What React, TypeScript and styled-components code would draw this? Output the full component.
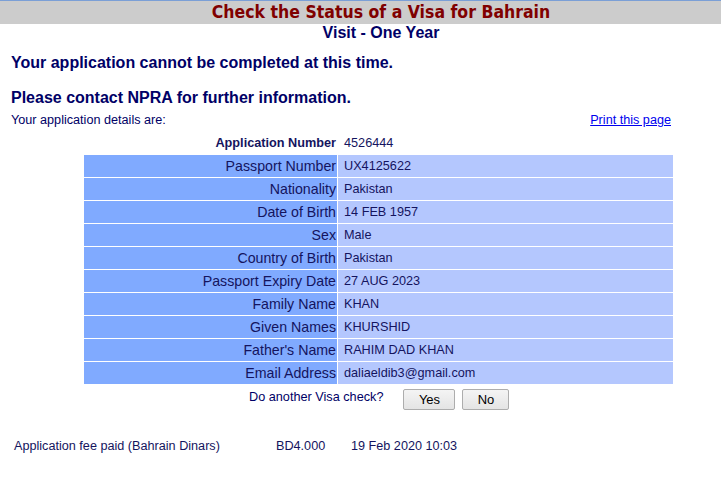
import React from "react";
import styled, { createGlobalStyle } from "styled-components";

const Global = createGlobalStyle`
  html, body { margin: 0; padding: 0; background: #ffffff; overflow: hidden; }
  body { font-family: "Liberation Sans", Arial, sans-serif; color: #000066; }
`;

const Page = styled.div`
  width: 100%;
`;

const Header = styled.div`
  border-top: 1px solid #7b9fd6;
  background: #cccccc;
  height: 23px;
  padding-left: 41px;
  display: flex;
  align-items: center;
  justify-content: center;
`;

const Title = styled.h1`
  margin: 0;
  font-family: "DejaVu Sans Condensed", "DejaVu Sans", sans-serif;
  font-stretch: condensed;
  font-weight: bold;
  font-size: 17.5px;
  line-height: 23px;
  color: #800000;
  white-space: nowrap;
`;

const SubTitle = styled.h2`
  margin: 0;
  padding-left: 41px;
  text-align: center;
  font-size: 16px;
  line-height: 18px;
  font-weight: bold;
  color: #000066;
`;

const Content = styled.div`
  padding-left: 11px;
`;

const Message = styled.p<{ $top: number }>`
  margin: ${(p) => p.$top}px 0 0;
  font-size: 16px;
  line-height: 19px;
  font-weight: bold;
  color: #000066;
`;

const DetailsBar = styled.div`
  display: flex;
  justify-content: space-between;
  align-items: baseline;
  width: 660px;
  margin-top: 6px;
  font-size: 12.65px;
  line-height: 15px;
`;

const PrintLink = styled.a`
  color: #0000ee;
  text-decoration: underline;
  cursor: pointer;
`;

const Table = styled.table`
  margin-left: 83px;
  width: 591px;
  border-spacing: 1px;
  border-collapse: separate;
  margin-top: 3px;
`;

const Label = styled.td<{ $plain?: boolean }>`
  width: 252px;
  height: 22px;
  padding: 0 1px 0 0;
  text-align: right;
  vertical-align: middle;
  background: ${(p) => (p.$plain ? "transparent" : "#80aaff")};
  font-size: ${(p) => (p.$plain ? "12.7px" : "14.2px")};
  font-weight: ${(p) => (p.$plain ? "bold" : "normal")};
  color: #14145e;
  white-space: nowrap;
`;

const Value = styled.td<{ $plain?: boolean }>`
  height: 22px;
  padding: 0 0 0 6px;
  vertical-align: middle;
  background: ${(p) => (p.$plain ? "transparent" : "#b4c7fe")};
  font-size: 12.7px;
  color: #14145e;
  white-space: nowrap;
`;

const AgainRow = styled.div`
  display: flex;
  align-items: flex-start;
  gap: 20px;
  margin-left: 249px;
  margin-top: 4px;
`;

const AgainText = styled.span`
  font-size: 12.7px;
  line-height: 15px;
  padding-top: 1px;
`;

const Buttons = styled.div`
  display: flex;
  gap: 7px;
`;

const Button = styled.button<{ $w: number }>`
  width: ${(p) => p.$w}px;
  height: 21px;
  padding: 0;
  font-family: "Liberation Sans", Arial, sans-serif;
  font-size: 13px;
  color: #000000;
  background: linear-gradient(#f4f4f4, #e4e4e4);
  border: 1px solid #adadad;
  border-radius: 2px;
`;

const FeeRow = styled.div`
  display: grid;
  grid-template-columns: 262px 75px auto;
  margin-top: 29px;
  padding-left: 14px;
  font-size: 12.65px;
  line-height: 15px;
  color: #14145e;
`;

const rows: [string, string][] = [
  ["Passport Number", "UX4125622"],
  ["Nationality", "Pakistan"],
  ["Date of Birth", "14 FEB 1957"],
  ["Sex", "Male"],
  ["Country of Birth", "Pakistan"],
  ["Passport Expiry Date", "27 AUG 2023"],
  ["Family Name", "KHAN"],
  ["Given Names", "KHURSHID"],
  ["Father's Name", "RAHIM DAD KHAN"],
  ["Email Address", "daliaeldib3@gmail.com"],
];

export default function App() {
  return (
    <Page>
      <Global />
      <Header>
        <Title>Check the Status of a Visa for Bahrain</Title>
      </Header>
      <SubTitle>Visit - One Year</SubTitle>
      <Content>
        <Message $top={11}>Your application cannot be completed at this time.</Message>
        <Message $top={16}>Please contact NPRA for further information.</Message>
        <DetailsBar>
          <span>Your application details are:</span>
          <PrintLink>Print this page</PrintLink>
        </DetailsBar>
      </Content>
      <Table>
        <tbody>
          <tr>
            <Label $plain>Application Number</Label>
            <Value $plain>4526444</Value>
          </tr>
          {rows.map(([k, v]) => (
            <tr key={k}>
              <Label>{k}</Label>
              <Value>{v}</Value>
            </tr>
          ))}
        </tbody>
      </Table>
      <AgainRow>
        <AgainText>Do another Visa check?</AgainText>
        <Buttons>
          <Button $w={52}>Yes</Button>
          <Button $w={47}>No</Button>
        </Buttons>
      </AgainRow>
      <FeeRow>
        <span>Application fee paid (Bahrain Dinars)</span>
        <span>BD4.000</span>
        <span>19 Feb 2020 10:03</span>
      </FeeRow>
    </Page>
  );
}
